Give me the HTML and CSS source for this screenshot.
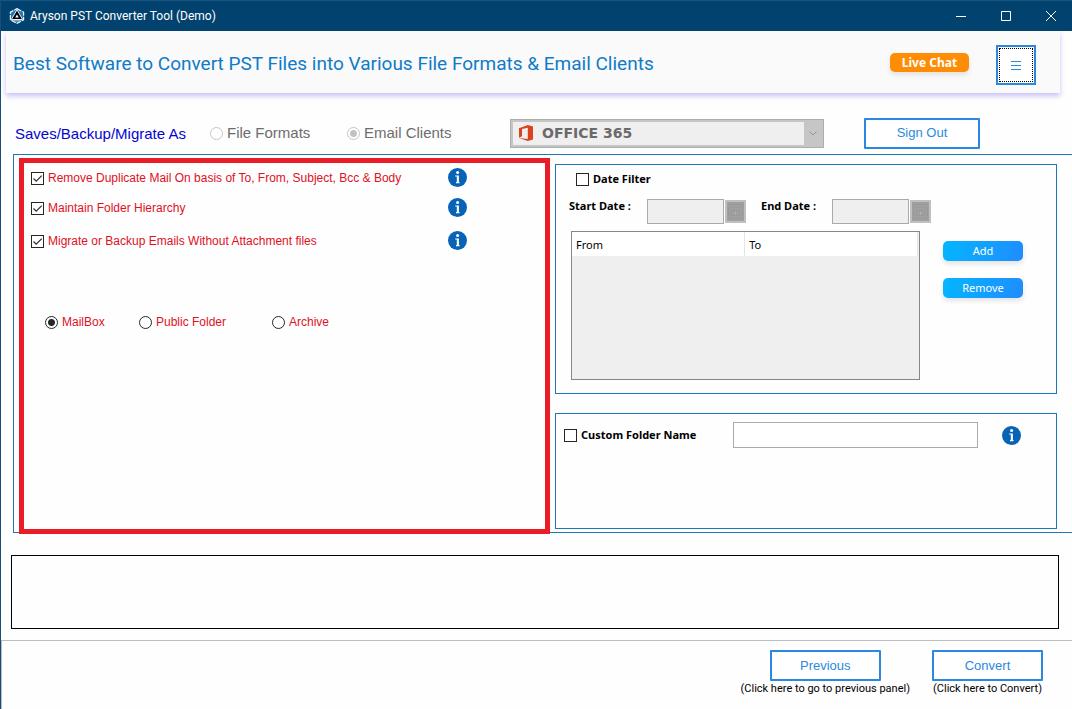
FILE: index.html
```html
<!DOCTYPE html>
<html lang="en">
<head>
<meta charset="utf-8">
<meta name="viewport" content="width=device-width, initial-scale=1">
<title>Aryson PST Converter Tool (Demo)</title>
<link rel="stylesheet" href="styles.css">
</head>
<body>
<svg width="0" height="0" class="sprite" aria-hidden="true">
  <symbol id="info" viewBox="0 0 19 19">
    <circle cx="9.5" cy="9.5" r="9.5" fill="#0663b5"/>
    <circle cx="9.6" cy="4.4" r="1.5" fill="#fff"/>
    <path d="M7.2 7.4h3.7v6.600h.6v1.200H8V14h.8V8.600H7.200z" fill="#fff"/>
  </symbol>
  <symbol id="calendar" viewBox="0 0 15 15">
    <path d="M.5 .5h14v14H.5zM3 3.500h9M3 6.500h9v5H3zM6 9h3" fill="none" stroke="#999"/>
    <path d="M7 8h1v3H7z" fill="#b4b4b4"/>
  </symbol>
</svg>
<div class="window">
  <header class="titlebar">
    <svg class="app-icon" viewBox="0 0 16 16" aria-hidden="true">
      <path d="M8 .6 14.600 4.200v7.600L8 15.400 1.400 11.800V4.200z" fill="#2277b5" stroke="#e8f3fa" stroke-width="1.200" stroke-dasharray="5 1"/>
      <path d="M8 1.800 13.600 11.500H2.400z" fill="#000" stroke="#fff" stroke-width=".9"/>
      <path d="M8 6.500 9.800 9.600H6.200z" fill="#fff"/>
      <path d="M4.500 12.800h7" stroke="#8fd0f5"/>
    </svg>
    <h1 class="window-title">Aryson PST Converter Tool (Demo)</h1>
    <div class="window-controls">
      <button class="window-button" type="button" aria-label="Minimize"><svg viewBox="0 0 12 12"><path d="M1 6.500h10"/></svg></button>
      <button class="window-button" type="button" aria-label="Maximize"><svg viewBox="0 0 12 12"><path d="M1.500 1.500h9v9h-9z"/></svg></button>
      <button class="window-button" type="button" aria-label="Close"><svg viewBox="0 0 12 12"><path d="M1 1l10 10M11 1 1 11"/></svg></button>
    </div>
  </header>

  <div class="banner">
    <h2 class="banner-title">Best Software to Convert PST Files into Various File Formats &amp; Email Clients</h2>
    <button class="chat-button" type="button">Live Chat</button>
    <button class="menu-button" type="button" aria-label="Menu"><svg viewBox="0 0 10 9"><path d="M0 .5h10M0 4.500h10M0 8.500h10"/></svg></button>
  </div>

  <div class="toolbar">
    <span class="toolbar-label">Saves/Backup/Migrate As</span>
    <label class="mode"><input class="radio" type="radio" name="mode" disabled>File Formats</label>
    <label class="mode"><input class="radio" type="radio" name="mode" checked disabled>Email Clients</label>
    <div class="combo">
      <div class="combo-field">
        <svg class="office-icon" viewBox="0 0 14 16" aria-hidden="true"><path d="M0 3.200 8.800 0 14 1.500v13L8.800 16 0 12.900l8.800 1V2.700L3 4.100v7.200L0 12.700z" fill="#dc4120"/></svg>
        <select class="combo-select" aria-label="Email client" disabled><option>OFFICE 365</option></select>
      </div>
      <svg class="combo-arrow" viewBox="0 0 8 5" aria-hidden="true"><path d="M.5 .5 4 4 7.500 .5"/></svg>
    </div>
    <button class="outline-button" type="button">Sign Out</button>
  </div>

  <main class="panel">
    <section class="options">
      <div class="option"><label class="choice"><input class="check" type="checkbox" checked>Remove Duplicate Mail On basis of To, From, Subject, Bcc &amp; Body</label><svg class="info"><use href="#info"/></svg></div>
      <div class="option"><label class="choice"><input class="check" type="checkbox" checked>Maintain Folder Hierarchy</label><svg class="info"><use href="#info"/></svg></div>
      <div class="option option-spaced"><label class="choice"><input class="check" type="checkbox" checked>Migrate or Backup Emails Without Attachment files</label><svg class="info"><use href="#info"/></svg></div>
      <div class="sources">
        <label class="choice"><input class="radio" type="radio" name="source" checked>MailBox</label>
        <label class="choice"><input class="radio" type="radio" name="source">Public Folder</label>
        <label class="choice"><input class="radio" type="radio" name="source">Archive</label>
      </div>
    </section>

    <div class="filters">
      <section class="group date-group">
        <label class="bold-choice date-toggle"><input class="check" type="checkbox">Date Filter</label>
        <div class="dates">
          <label class="date-label" for="start">Start Date :</label>
          <div class="date-field"><input class="date-input" id="start" type="text" disabled><button class="date-button" type="button" aria-label="Pick start date" disabled><svg><use href="#calendar"/></svg></button></div>
          <label class="date-label" for="end">End Date :</label>
          <div class="date-field"><input class="date-input" id="end" type="text" disabled><button class="date-button" type="button" aria-label="Pick end date" disabled><svg><use href="#calendar"/></svg></button></div>
        </div>
        <div class="ranges">
          <div class="range-list">
            <table class="range-table"><thead><tr><th scope="col">From</th><th scope="col">To</th></tr></thead></table>
          </div>
          <div class="range-actions">
            <button class="fill-button" type="button">Add</button>
            <button class="fill-button" type="button">Remove</button>
          </div>
        </div>
      </section>

      <section class="group folder-group">
        <label class="bold-choice"><input class="check" type="checkbox">Custom Folder Name</label>
        <input class="folder-input" type="text" aria-label="Custom folder name">
        <svg class="info"><use href="#info"/></svg>
      </section>
    </div>
  </main>

  <div class="log"></div>

  <footer class="footer">
    <div class="step"><button class="outline-button" type="button">Previous</button><span>(Click here to go to previous panel)</span></div>
    <div class="step"><button class="outline-button" type="button">Convert</button><span>(Click here to Convert)</span></div>
  </footer>
</div>
</body>
</html>
```
FILE: styles.css
```css
* { box-sizing: border-box; }

body {
  margin: 0;
  background: #fefefe;
  color: #000;
  font: 11px/14px "Noto Sans", "Open Sans", sans-serif;
}

button, input, select { font: inherit; margin: 0; padding: 0; }
svg { display: block; }
.sprite { position: absolute; }

.window {
  display: flex;
  flex-direction: column;
  min-height: 100vh;
  border-left: 1px solid #1c4c7c;
}

/* Title bar */
.titlebar {
  display: flex;
  align-items: center;
  height: 31px;
  padding-left: 8px;
  background: #02426f;
  border-top: 1px solid #1b557f;
  color: #fff;
}
.app-icon { width: 16px; height: 16px; margin-right: 5px; }
.window-title { margin: 0; flex: 1; font: 12px/16px Roboto, "Open Sans", sans-serif; }
.window-controls { display: flex; margin-right: -2px; }
.window-button {
  display: grid;
  place-items: center;
  width: 45px;
  height: 28px;
  padding-right: 1px;
  border: 0;
  background: none;
}
.window-button svg { width: 12px; height: 12px; fill: none; stroke: #fff; }

/* Banner */
.banner {
  display: flex;
  align-items: center;
  height: 62px;
  margin: 0 12px 0 5px;
  padding: 6px 24px 0 7px;
  background: #fafafa;
  box-shadow: 0 3px 5px #c9bff8;
  clip-path: inset(0 -8px -10px -8px);
}
.banner-title {
  flex: 1;
  margin: 0 0 3px;
  color: #0f7bc8;
  font: 19px/24px Roboto, "Liberation Sans", sans-serif;
}
.chat-button {
  width: 79px;
  height: 19px;
  margin: 0 27px 5px 0;
  border: 0;
  border-radius: 5px;
  background: #ff8c05;
  box-shadow: 0 3px 5px #e2e2e2;
  color: #fff;
  font-size: 12px;
  font-weight: 700;
  line-height: 18px;
}
.menu-button {
  display: grid;
  place-items: center;
  width: 40px;
  height: 40px;
  border: 2px solid #2b88e0;
  background: #fff;
  outline: 1px dotted #000;
  outline-offset: -4px;
}
.menu-button svg { width: 10px; height: 9px; stroke: #2b8ad0; }

/* Toolbar */
.toolbar {
  display: grid;
  grid-template-columns: 195px 137px 163px minmax(0, 314px) 116px;
  align-items: center;
  height: 61px;
  padding: 19px 20px 0 14px;
  font: 15px/20px "Liberation Sans", Arial, sans-serif;
}
.toolbar .outline-button { margin-left: 40px; }
.toolbar-label { padding-top: 2px; color: #0404d0; }
.mode { display: flex; align-items: center; gap: 4px; color: #6d6d6d; }

.combo {
  display: flex;
  align-items: center;
  height: 29px;
  padding: 2px;
  border: 1px solid #adadad;
  background: #c6c6c6;
}
.combo-field {
  display: flex;
  flex: 1;
  align-items: center;
  height: 23px;
  padding-left: 6px;
  background: #efefef;
}
.office-icon { width: 14px; height: 16px; }
.combo-select {
  flex: 1;
  appearance: none;
  margin-left: 9px;
  border: 0;
  background: none;
  color: #6a6a6a;
  opacity: 1;
  font: 700 14px/20px "DejaVu Sans", Verdana, sans-serif;
}
.combo-arrow { width: 8px; height: 5px; margin: 0 4px 0 5px; fill: none; stroke: #929292; }

.outline-button {
  width: 116px;
  height: 31px;
  border: 2px solid #2b88e0;
  border-radius: 1px;
  background: #fff;
  color: #2b88e0;
  font: 13px/16px "Liberation Sans", Arial, sans-serif;
}

/* Tick boxes and radio buttons */
.check, .radio {
  appearance: none;
  flex: none;
  width: 13px;
  height: 13px;
  border: 1px solid #262626;
  background: #fff;
}
.check:checked {
  background: #fff url("data:image/svg+xml,%3Csvg xmlns='http://www.w3.org/2000/svg' viewBox='0 0 11 11'%3E%3Cpath d='M1.500 5.500l2.700 2.700L9.800 2.600' fill='none' stroke='%23333' stroke-width='1.300'/%3E%3C/svg%3E");
}
.radio { border-radius: 50%; }
.radio:checked { background: radial-gradient(circle, #262626 3px, #fff 4px); }
.radio:disabled { border-color: #c6c6c6; }
.radio:checked:disabled { background: radial-gradient(circle, #c2c2c2 3px, #fff 4px); }

/* Main panel */
.panel {
  display: grid;
  grid-template-columns: 531fr 502fr;
  gap: 5px;
  min-height: 379px;
  margin-left: 12px;
  padding: 0 15px 0 5px;
  border: 1px solid #1c78b4;
  border-right: 0;
}
.options {
  margin: 3px 0 -2px;
  border: 5px solid #ea1c27;
  color: #e0101e;
  font: 12px/18px "Liberation Sans", Arial, sans-serif;
}
.option {
  display: grid;
  grid-template-columns: 417px 19px;
  align-items: center;
  height: 30px;
  padding-left: 7px;
}
.option-spaced { margin-top: 3px; }
.choice, .bold-choice { display: flex; align-items: center; gap: 4px; }
.bold-choice { font-weight: 700; }
.info { width: 19px; height: 19px; }
.option .info { margin-bottom: 1px; }
.sources {
  display: grid;
  grid-template-columns: 94px 133px auto;
  align-items: center;
  height: 30px;
  margin-top: 51px;
  padding-left: 21px;
}

/* Filters */
.filters { display: flex; flex-direction: column; gap: 19px; padding: 9px 0 3px; }
.group { border: 1px solid #1c78b4; }
.date-group { padding: 7px 12px 13px 13px; min-height: 230px; }
.date-toggle { padding-left: 7px; }
.dates {
  display: grid;
  grid-template-columns: 78px 114px 71px 99px;
  align-items: start;
  margin-top: 13px;
}
.date-label { font-weight: 700; }
.date-field { display: flex; align-items: center; gap: 1px; }
.date-input {
  width: 77px;
  height: 25px;
  border: 1px solid #aaa;
  background: #efefef;
}
.date-button {
  display: grid;
  place-items: center;
  width: 21px;
  height: 23px;
  border: 2px solid #c0c0c0;
  background: #a0a0a0;
}
.date-button svg { width: 15px; height: 15px; }
.ranges { display: flex; gap: 23px; margin: 7px 0 0 2px; }
.range-list {
  flex: 1;
  height: 149px;
  padding-right: 1px;
  border: 1px solid #868686;
  background: #efefef;
}
.range-table { width: 100%; border-collapse: collapse; background: #fff; }
.range-table th {
  width: 50%;
  height: 24px;
  padding: 2px 0 0 4px;
  border-right: 1px solid #e4e4e4;
  font-weight: 400;
  text-align: left;
}
.range-actions { display: flex; flex-direction: column; gap: 17px; padding: 10px 21px 0 0; }
.fill-button {
  width: 80px;
  height: 20px;
  border: 0;
  border-radius: 5px;
  background: linear-gradient(110deg, #04b6ff, #208cff);
  box-shadow: 0 3px 5px #e4e4e4;
  color: #fff;
}

.folder-group {
  display: grid;
  grid-template-columns: 169px minmax(0, 245px) 19px;
  align-items: center;
  align-content: start;
  flex: 1;
  padding: 8px;
}
.folder-group .info { margin-left: 24px; }
.folder-input { height: 26px; border: 1px solid #aaa; background: #fff; }

/* Log and footer */
.log { height: 74px; margin: 22px 13px 11px 10px; border: 1px solid #000; }
.footer {
  display: flex;
  flex: 1;
  justify-content: flex-end;
  gap: 22px;
  padding: 9px 29px 0 0;
  border: 1px solid #b9bdc2;
  border-width: 1px 0 0 1px;
}
.step {
  display: flex;
  flex-direction: column;
  align-items: center;
  gap: 1px;
  font-family: Roboto, "Noto Sans", sans-serif;
}
.step .outline-button { width: 111px; }
```
